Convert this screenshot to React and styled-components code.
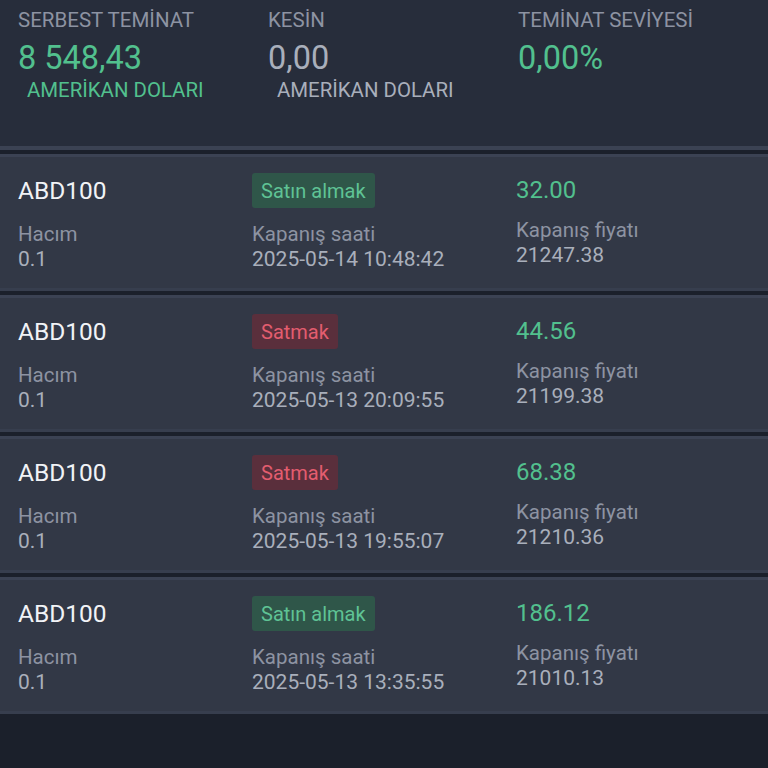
import React from 'react'
import styled, { createGlobalStyle } from 'styled-components'

/******************************************************************************/
// Data
/******************************************************************************/

const summary = [
  { label: 'SERBEST TEMİNAT', value: '8 548,43', unit: 'AMERİKAN DOLARI', tone: 'green' },
  { label: 'KESİN', value: '0,00', unit: 'AMERİKAN DOLARI', tone: 'gray' },
  { label: 'TEMİNAT SEVİYESİ', value: '0,00%', tone: 'green' }
]

const positions = [
  { symbol: 'ABD100', side: 'buy', volume: '0.1', time: '2025-05-14 10:48:42', profit: '32.00', price: '21247.38' },
  { symbol: 'ABD100', side: 'sell', volume: '0.1', time: '2025-05-13 20:09:55', profit: '44.56', price: '21199.38' },
  { symbol: 'ABD100', side: 'sell', volume: '0.1', time: '2025-05-13 19:55:07', profit: '68.38', price: '21210.36' },
  { symbol: 'ABD100', side: 'buy', volume: '0.1', time: '2025-05-13 13:35:55', profit: '186.12', price: '21010.13' }
]

const colors = {
  page: '#1b202b',
  header: '#272d3b',
  card: '#323846',
  edge: '#3b4253',
  label: '#8d93a2',
  value: '#a9afbb',
  white: '#f1f3f6',
  green: '#52c08e'
}

/******************************************************************************/
// Styled
/******************************************************************************/

const GlobalStyle = createGlobalStyle`
  body {
    margin: 0;
    background: ${colors.page};
    font-family: Roboto, "Liberation Sans", sans-serif;
  }
`

const Page = styled.div`
  min-height: 768px;
  background: ${colors.page};
  display: flex;
  flex-direction: column;
  gap: 4px;
`

const Summary = styled.header`
  height: 150px;
  box-sizing: border-box;
  padding: 8px 18px 0;
  background: ${colors.header};
  border-bottom: 4px solid ${colors.edge};
  display: grid;
  grid-template-columns: 250px 250px 1fr;
  align-items: start;
`

const Stat = styled.div`
  display: flex;
  flex-direction: column;
`

const StatLabel = styled.div`
  font-size: 20.5px;
  line-height: 24px;
  color: ${colors.label};
`

// line boxes tall enough that the big number and the unit don't overlap
const StatValue = styled.div`
  margin-top: 7px;
  font-size: 32.5px;
  line-height: 39px;
  color: ${p => (p.$tone === 'green' ? colors.green : colors.value)};
`

const StatUnit = styled.div`
  margin-left: 9px;
  font-size: 20.4px;
  line-height: 24px;
  color: ${p => (p.$tone === 'green' ? colors.green : colors.value)};
`

const List = styled.section`
  display: flex;
  flex-direction: column;
  gap: 4px;
`

const Card = styled.article`
  background: ${colors.card};
  border-top: 3px solid ${colors.edge};
  border-bottom: 3px solid #373e4e;
  padding: 16px 18px 16px;
  display: grid;
  grid-template-columns: 234px 264px 1fr;
`

const Column = styled.div`
  display: flex;
  flex-direction: column;
  align-items: flex-start;
`

const Symbol = styled.div`
  height: 35px;
  display: flex;
  align-items: center;
  font-size: 24.5px;
  color: ${colors.white};
`

const Profit = styled.div`
  margin-top: 3px;
  font-size: 24px;
  line-height: 28px;
  color: ${colors.green};
`

const Side = styled.span`
  height: 35px;
  padding: 0 9px;
  display: inline-flex;
  align-items: center;
  border-radius: 3px;
  font-size: 20px;
  background: ${p => (p.$side === 'buy' ? '#2f5649' : '#5a2f3c')};
  color: ${p => (p.$side === 'buy' ? '#5fc395' : '#e35d6f')};
`

const Label = styled.div`
  margin-top: 14px;
  font-size: 20.5px;
  line-height: 25px;
  color: ${colors.label};
`

const Value = styled.div`
  font-size: 21px;
  line-height: 25px;
  color: ${colors.value};
`

/******************************************************************************/
// Main Component
/******************************************************************************/

const Position = ({ symbol, side, volume, time, profit, price }) =>
  <Card>
    <Column>
      <Symbol>{symbol}</Symbol>
      <Label>Hacım</Label>
      <Value>{volume}</Value>
    </Column>
    <Column>
      <Side $side={side}>{side === 'buy' ? 'Satın almak' : 'Satmak'}</Side>
      <Label>Kapanış saati</Label>
      <Value>{time}</Value>
    </Column>
    <Column>
      <Profit>{profit}</Profit>
      <Label>Kapanış fiyatı</Label>
      <Value>{price}</Value>
    </Column>
  </Card>

const App = () => <>
  <GlobalStyle />
  <Page>
    <Summary>
      {summary.map(s =>
        <Stat key={s.label}>
          <StatLabel>{s.label}</StatLabel>
          <StatValue $tone={s.tone}>{s.value}</StatValue>
          {s.unit && <StatUnit $tone={s.tone}>{s.unit}</StatUnit>}
        </Stat>
      )}
    </Summary>
    <List>
      {positions.map((p, i) => <Position key={i} {...p} />)}
    </List>
  </Page>
</>

/******************************************************************************/
// Exports
/******************************************************************************/

export default App
